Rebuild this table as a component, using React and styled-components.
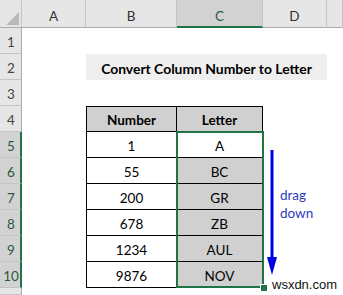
import React from "react";
import styled, { createGlobalStyle } from "styled-components";

const Global = createGlobalStyle`
  html, body { margin: 0; padding: 0; background: #fff; overflow: hidden; }
  body { font-family: Lato, "Open Sans", Arial, sans-serif; }
`;

const GREEN = "#217346";

const Sheet = styled.div`
  position: relative;
  width: 343px;
  height: 295px;
  display: grid;
  grid-template-columns: 22px 64px 91px 86px 64px 16px;
  grid-template-rows: 28px repeat(10, 26px) 7px;
  background: #fff;
  overflow: hidden;
`;

const Corner = styled.div`
  background: #e6e6e6;
  border-right: 1px solid #c4c4c4;
  border-bottom: 1px solid #ababab;
  box-sizing: border-box;
  position: relative;
  &::after {
    content: "";
    position: absolute;
    right: 2px;
    bottom: 2px;
    width: 0;
    height: 0;
    border-left: 13px solid transparent;
    border-bottom: 13px solid #b9b9b9;
  }
`;

const ColHeader = styled.div`
  box-sizing: border-box;
  background: ${(p) => (p.$selected ? "#d2d2d2" : "#e6e6e6")};
  border-right: 1px solid #c4c4c4;
  border-bottom: ${(p) => (p.$selected ? `2px solid ${GREEN}` : "1px solid #ababab")};
  display: flex;
  align-items: center;
  justify-content: center;
  padding-top: ${(p) => (p.$selected ? "5px" : "4px")};
  font-size: 13.5px;
  color: ${(p) => (p.$selected ? "#2c5a3c" : "#333")};
`;

const RowHeader = styled.div`
  box-sizing: border-box;
  background: ${(p) => (p.$selected ? "#d2d2d2" : "#e6e6e6")};
  border-bottom: 1px solid #c4c4c4;
  border-right: ${(p) => (p.$selected ? `2px solid ${GREEN}` : "1px solid #ababab")};
  display: flex;
  align-items: center;
  justify-content: center;
  padding-top: 3px;
  padding-left: ${(p) => (p.$selected ? "2px" : "1px")};
  font-size: 13.5px;
  color: ${(p) => (p.$selected ? "#2c5a3c" : "#444")};
`;

const Blank = styled.div`
  background: #fff;
`;

const Title = styled.div`
  grid-column: 3 / 6;
  background: #efefef;
  display: flex;
  align-items: center;
  justify-content: center;
  padding-top: 2px;
  font-weight: 700;
  font-size: 13.9px;
  color: #000;
`;

const TCell = styled.div`
  box-sizing: border-box;
  background: ${(p) => (p.$shade ? "#d0d0d0" : "#fff")};
  border-bottom: 1px solid #000;
  border-right: 1px solid #000;
  border-left: ${(p) => (p.$first ? "1px solid #000" : "none")};
  border-top: ${(p) => (p.$top ? "1px solid #000" : "none")};
  display: flex;
  align-items: center;
  justify-content: center;
  padding-top: 2px;
  font-size: 13.5px;
  font-weight: ${(p) => (p.$head ? 700 : 400)};
  color: #000;
`;

const Selection = styled.div`
  position: absolute;
  left: 176px;
  top: 131px;
  width: 88px;
  height: 157px;
  border: 2px solid ${GREEN};
  box-sizing: border-box;
  pointer-events: none;
`;

const Handle = styled.div`
  position: absolute;
  left: 260px;
  top: 284px;
  width: 6px;
  height: 6px;
  background: ${GREEN};
  border: 1px solid #fff;
`;

const Arrow = styled.svg`
  position: absolute;
  left: 266px;
  top: 148px;
`;

const DragNote = styled.div`
  position: absolute;
  left: 280px;
  top: 186px;
  font-size: 13.5px;
  line-height: 18px;
  color: #2d3cc0;
`;

const Watermark = styled.div`
  position: absolute;
  left: 270px;
  top: 277px;
  font-family: "Liberation Sans", Arial, sans-serif;
  font-size: 13px;
  line-height: 15px;
  color: #111;
  background: #fff;
  padding: 0 2px;
`;

const data = [
  ["1", "A"],
  ["55", "BC"],
  ["200", "GR"],
  ["678", "ZB"],
  ["1234", "AUL"],
  ["9876", "NOV"],
];

export default function App() {
  const rows = [];
  for (let r = 1; r <= 10; r++) {
    const sel = r >= 5;
    rows.push(
      <RowHeader key={`h${r}`} $selected={sel}>
        {r}
      </RowHeader>
    );
    if (r === 2) {
      rows.push(<Blank key={`a${r}`} />);
      rows.push(<Title key="title">Convert Column Number to Letter</Title>);
      rows.push(<Blank key={`e${r}`} />);
    } else if (r === 4) {
      rows.push(<Blank key={`a${r}`} />);
      rows.push(
        <TCell key="hb" $head $shade $first $top>
          Number
        </TCell>
      );
      rows.push(
        <TCell key="hc" $head $shade $top>
          Letter
        </TCell>
      );
      rows.push(<Blank key={`d${r}`} />);
      rows.push(<Blank key={`e${r}`} />);
    } else if (r >= 5) {
      const [n, l] = data[r - 5];
      rows.push(<Blank key={`a${r}`} />);
      rows.push(
        <TCell key={`b${r}`} $first>
          {n}
        </TCell>
      );
      rows.push(
        <TCell key={`c${r}`} $shade={r !== 5}>
          {l}
        </TCell>
      );
      rows.push(<Blank key={`d${r}`} />);
      rows.push(<Blank key={`e${r}`} />);
    } else {
      for (let c = 0; c < 5; c++) rows.push(<Blank key={`x${r}-${c}`} />);
    }
  }

  return (
    <>
      <Global />
      <Sheet>
        <Corner />
        <ColHeader>A</ColHeader>
        <ColHeader>B</ColHeader>
        <ColHeader $selected>C</ColHeader>
        <ColHeader>D</ColHeader>
        <ColHeader />
        {rows}
        <RowHeader />
        <Blank />
        <Blank />
        <Blank />
        <Blank />
        <Blank />
        <Selection />
        <Handle />
        <Arrow width="12" height="130" viewBox="0 0 12 130">
          <rect x="4.5" y="2" width="3" height="110" fill="#0000e6" />
          <polygon points="1,109 11,109 6,127" fill="#0000e6" />
        </Arrow>
        <DragNote>
          drag
          <br />
          down
        </DragNote>
        <Watermark>wsxdn.com</Watermark>
      </Sheet>
    </>
  );
}
